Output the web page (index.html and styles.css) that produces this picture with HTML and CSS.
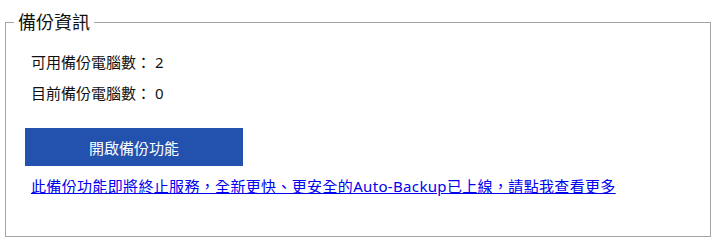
FILE: index.html
```html
<!DOCTYPE html>
<html lang="zh-Hant">
<head>
<meta charset="utf-8">
<title>備份資訊</title>
<link rel="stylesheet" href="styles.css">
</head>
<body>
<div class="page">
  <fieldset class="panel">
    <legend class="panel-title">備份資訊</legend>
    <div class="panel-body">
      <div class="stat">可用備份電腦數： 2</div>
      <div class="stat">目前備份電腦數： 0</div>
      <button class="btn-primary" type="button">開啟備份功能</button>
      <a class="notice-link" href="#">此備份功能即將終止服務，全新更快、更安全的Auto-Backup已上線，請點我查看更多</a>
    </div>
  </fieldset>
</div>
</body>
</html>
```

FILE: styles.css
```css
html, body {
  margin: 0;
  padding: 0;
  background: #ffffff;
}
body {
  font-family: "Noto Sans", "Noto Sans CJK TC", sans-serif;
  color: #111111;
}
.page {
  padding: 10px 11px 0 5px;
}
.panel {
  margin: 0;
  padding: 0 0 40px 0;
  border: 1px solid #a3a3a3;
  min-width: 0;
}
.panel-title {
  margin-left: 8px;
  padding: 0 4px;
  font-size: 18px;
  line-height: 24px;
  color: #111111;
}
.panel-body {
  display: flex;
  flex-direction: column;
  align-items: flex-start;
  padding: 13px 0 0 19px;
}
.stat {
  font-size: 15px;
  line-height: 31px;
  height: 31px;
  padding-left: 6px;
}
.btn-primary {
  margin-top: 19px;
  width: 218px;
  height: 38px;
  border: 0;
  background: #2352ae;
  color: #ffffff;
  font-family: "Noto Sans", "Noto Sans CJK TC", sans-serif;
  font-size: 15px;
  padding: 0;
}
.notice-link {
  margin-top: 10px;
  margin-left: 6px;
  font-size: 15px;
  line-height: 20px;
  letter-spacing: 0.34px;
  color: #0000ee;
  text-decoration: underline;
}
```
